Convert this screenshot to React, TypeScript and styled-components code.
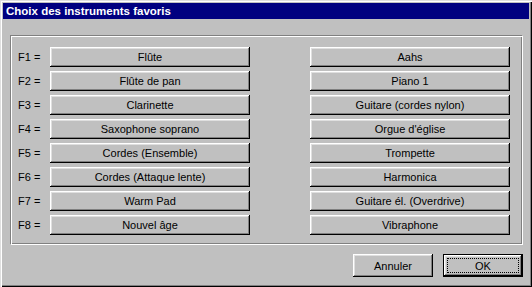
import React from "react";
import styled, { createGlobalStyle } from "styled-components";

const GlobalStyle = createGlobalStyle`
  html, body {
    margin: 0;
    padding: 0;
    background: #c0c0c0;
  }
  * {
    box-sizing: border-box;
  }
`;

const left = ["Flûte", "Flûte de pan", "Clarinette", "Saxophone soprano", "Cordes (Ensemble)", "Cordes (Attaque lente)", "Warm Pad", "Nouvel âge"];
const right = ["Aahs", "Piano 1", "Guitare (cordes nylon)", "Orgue d'église", "Trompette", "Harmonica", "Guitare él. (Overdrive)", "Vibraphone"];

function App() {
  return (
    <>
      <GlobalStyle />
      <StWindow>
        <StTitleBar>Choix des instruments favoris</StTitleBar>
        <StGroup>
          {left.map((name, i) => (
            <React.Fragment key={name}>
              <StLabel>F{i + 1} =</StLabel>
              <StButton>{name}</StButton>
              <span />
              <StButton>{right[i]}</StButton>
            </React.Fragment>
          ))}
        </StGroup>
        <StFooter>
          <StButton $wide>Annuler</StButton>
          <StDefaultButton>
            <StFocus>OK</StFocus>
          </StDefaultButton>
        </StFooter>
      </StWindow>
    </>
  );
}

const StWindow = styled.div`
  width: 532px;
  height: 287px;
  padding: 3px;
  background: #c0c0c0;
  box-shadow: inset 1px 1px #dfdfdf, inset 2px 2px #ffffff, inset -1px -1px #000000, inset -2px -2px #808080;
  font-family: "Liberation Sans", Arial, sans-serif;
  font-size: 11px;
  color: #000;
  display: flex;
  flex-direction: column;
`;

const StTitleBar = styled.div`
  height: 16px;
  background: #000080;
  color: #fff;
  font-weight: bold;
  font-size: 11.5px;
  line-height: 16px;
  padding-left: 3px;
  white-space: nowrap;
`;

const StGroup = styled.div`
  margin: 16px 6px 0 7px;
  width: 513px;
  padding: 11px 0 9px 7px;
  border-top: 1px solid #808080;
  border-left: 1px solid #808080;
  border-right: 1px solid #ffffff;
  border-bottom: 1px solid #ffffff;
  box-shadow: inset 1px 1px #ffffff, inset -1px -1px #808080;
  display: grid;
  grid-template-columns: 32px 200px 60px 200px;
  grid-auto-rows: 20px;
  row-gap: 4px;
`;

const StLabel = styled.div`
  display: flex;
  align-items: center;
  white-space: nowrap;
`;

const StButton = styled.div<{ $wide?: boolean }>`
  width: ${(p) => (p.$wide ? "80px" : "auto")};
  height: ${(p) => (p.$wide ? "23px" : "auto")};
  background: #c0c0c0;
  box-shadow: inset -1px -1px #000000, inset 1px 1px #ffffff, inset -2px -2px #808080, inset 2px 2px #dfdfdf;
  display: flex;
  align-items: center;
  justify-content: center;
  white-space: nowrap;
`;

const StFooter = styled.div`
  margin: 9px 6px 0 0;
  display: flex;
  justify-content: flex-end;
  gap: 10px;
`;

const StDefaultButton = styled.div`
  width: 80px;
  height: 23px;
  border: 1px solid #000;
  background: #c0c0c0;
  box-shadow: inset -1px -1px #000000, inset 1px 1px #ffffff, inset -2px -2px #808080, inset 2px 2px #dfdfdf;
  padding: 3px;
  display: flex;
`;

const StFocus = styled.div`
  flex: 1;
  border: 1px dotted #000;
  display: flex;
  align-items: center;
  justify-content: center;
`;

export default App;
